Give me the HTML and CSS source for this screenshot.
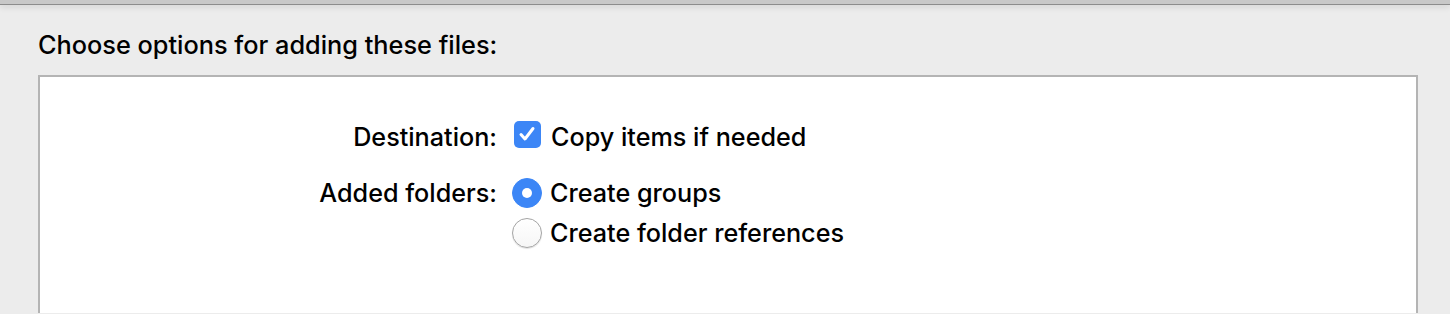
FILE: index.html
```html
<!DOCTYPE html>
<html lang="en">
<head>
    <meta charset="UTF-8">
    <title>Choose options</title>
    <link rel="stylesheet" href="styles.css">
</head>
<body>
    <div class="topbar"></div>
    <div class="sheet">
        <h1 class="title">Choose options for adding these files:</h1>
        <div class="box">
            <div class="form">
                <div class="label">Destination:</div>
                <div class="opts">
                    <label class="opt">
                        <span class="check">
                            <svg width="26" height="26" viewBox="0 0 26 26"><path d="M7 13.5 L11 18 L19 7.5" fill="none" stroke="#fff" stroke-width="3" stroke-linecap="round" stroke-linejoin="round"/></svg>
                        </span>
                        Copy items if needed
                    </label>
                </div>
                <div class="label">Added folders:</div>
                <div class="opts">
                    <label class="opt"><span class="radio on"></span>Create groups</label>
                    <label class="opt"><span class="radio"></span>Create folder references</label>
                </div>
            </div>
        </div>
    </div>
</body>
</html>
```

FILE: styles.css
```css
*{margin:0;padding:0;box-sizing:border-box;}
html,body{height:100%;overflow:hidden;}
body{
    background:#ececec;
    font-family:Inter,"Liberation Sans",sans-serif;
    font-weight:500;
    color:#000;
}
.topbar{
    height:5px;
    background:#c8c8c8;
    border-bottom:1px solid #8c8c8c;
    box-shadow:0 2px 6px rgba(0,0,0,.12);
}
.sheet{
    padding:25px 0 0 38px;
}
.title{
    font-size:25.3px;
    font-weight:500;
    line-height:30px;
}
.box{
    margin-top:15px;
    width:1380px;
    height:238px;
    background:#fff;
    border:2px solid #b4b4b4;
    border-bottom:none;
    padding-top:40px;
}
.form{
    display:grid;
    grid-template-columns:457px auto;
    column-gap:17px;
    row-gap:16px;
    font-size:25.2px;
}
.label{
    text-align:right;
    line-height:40px;
}
.opt{
    display:flex;
    align-items:center;
    height:40px;
}
.check{
    width:27px;
    height:27px;
    border-radius:5px;
    background:#3c86f6;
    margin:0 10px 6px 0;
}
.check svg{display:block;}
.radio{
    width:30px;
    height:30px;
    border-radius:50%;
    border:1px solid #a4a4a4;
    background:linear-gradient(#fff,#f6f6f6);
    box-shadow:0 1px 1px rgba(0,0,0,.12);
    margin:0 8px 0 -2px;
    position:relative;
}
.radio.on{
    background:#3c86f6;
    border-color:#3c86f6;
    box-shadow:none;
}
.radio.on:after{
    content:"";
    position:absolute;
    left:50%;
    top:50%;
    width:10px;
    height:10px;
    margin:-5px 0 0 -5px;
    border-radius:50%;
    background:#fff;
}
```
